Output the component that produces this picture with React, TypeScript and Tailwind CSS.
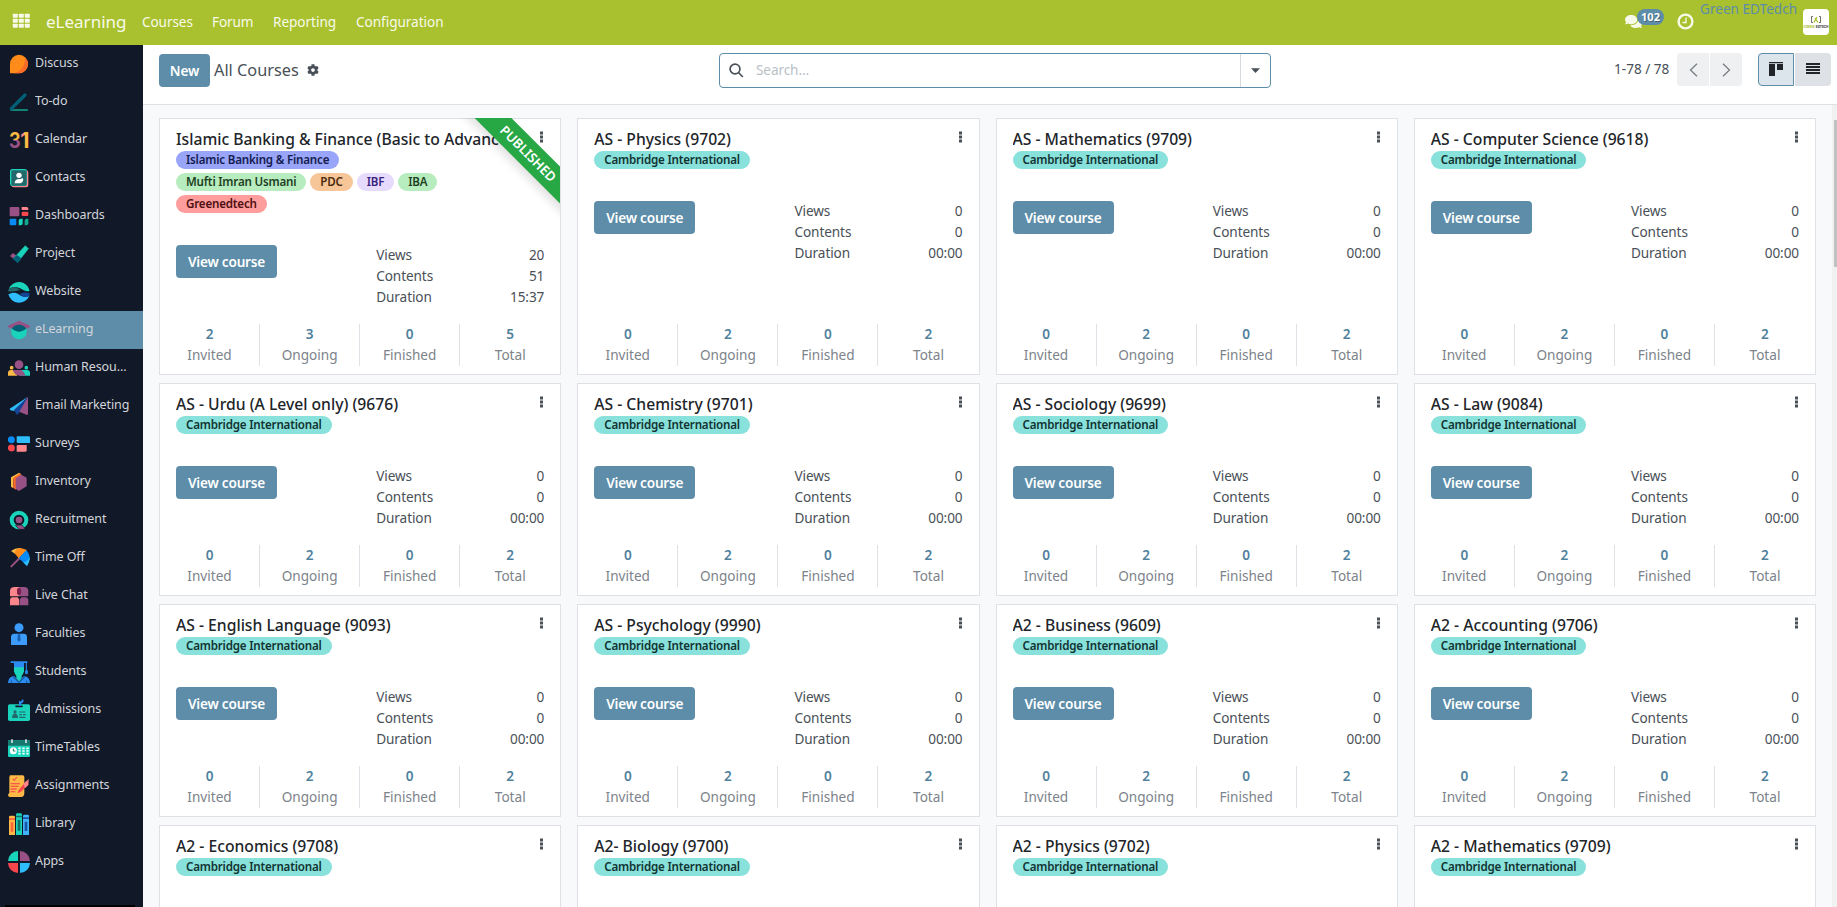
import type { ReactNode } from 'react';
import { FaCog, FaComments } from 'react-icons/fa';

type Tag = { label: string; tone: string };
type Course = {
  title: string;
  tags: Tag[];
  views: string;
  contents: string;
  duration: string;
  stats: [string, string, string, string];
  published?: boolean;
};

const cambridge: Tag[] = [{ label: 'Cambridge International', tone: 'bg-[#89e1db] text-[#113432]' }];

const basic = (title: string): Course => ({
  title,
  tags: cambridge,
  views: '0',
  contents: '0',
  duration: '00:00',
  stats: ['0', '2', '0', '2'],
});

const courses: Course[] = [
  {
    title: 'Islamic Banking & Finance (Basic to Advance)',
    tags: [
      { label: 'Islamic Banking & Finance', tone: 'bg-[#98a5f8] text-[#141c4f]' },
      { label: 'Mufti Imran Usmani', tone: 'bg-[#b7edbe] text-[#1e4023]' },
      { label: 'PDC', tone: 'bg-[#f7c698] text-[#4a2c0e]' },
      { label: 'IBF', tone: 'bg-[#e6dbfc] text-[#3b1f80]' },
      { label: 'IBA', tone: 'bg-[#b7edbe] text-[#1e4023]' },
      { label: 'Greenedtech', tone: 'bg-[#ff9c9c] text-[#4d1010]' },
    ],
    views: '20',
    contents: '51',
    duration: '15:37',
    stats: ['2', '3', '0', '5'],
    published: true,
  },
  ...[
    'AS - Physics (9702)',
    'AS - Mathematics (9709)',
    'AS - Computer Science (9618)',
    'AS - Urdu (A Level only) (9676)',
    'AS - Chemistry (9701)',
    'AS - Sociology (9699)',
    'AS - Law (9084)',
    'AS - English Language (9093)',
    'AS - Psychology (9990)',
    'A2 - Business (9609)',
    'A2 - Accounting (9706)',
    'A2 - Economics (9708)',
    'A2- Biology (9700)',
    'A2 - Physics (9702)',
    'A2 - Mathematics (9709)',
  ].map(basic),
];

const apps: { name: string; icon: ReactNode }[] = [
  {
    name: 'Discuss',
    icon: (
      <>
        <path d="M6 61V33a27 28 0 1 1 27 28z" fill="#ff8c1a" />
        <path d="M52 14a28 28 0 0 1-19 47H16C38 56 52 40 52 14z" fill="#fc6a2a" />
      </>
    ),
  },
  {
    name: 'To-do',
    icon: (
      <>
        <path d="M10 53 51 12" stroke="#035f75" strokeWidth="10" strokeLinecap="round" />
        <path d="M10 57h48" stroke="#12a88f" strokeWidth="4" strokeLinecap="round" />
        <path d="M6 59l0-10 12 8z" fill="#035f75" />
      </>
    ),
  },
  {
    name: 'Calendar',
    icon: (
      <>
        <defs>
          <linearGradient id="three" x1="0" y1="0" x2="0" y2="1">
            <stop offset="0.5" stopColor="#fbb945" />
            <stop offset="0.5" stopColor="#985184" />
          </linearGradient>
          <linearGradient id="one" x1="0" y1="0" x2="1" y2="0">
            <stop offset="0.42" stopColor="#fc868b" />
            <stop offset="0.42" stopColor="#fbb945" />
          </linearGradient>
        </defs>
        <text x="3" y="57" fontFamily="Inter, sans-serif" fontWeight="700" fontSize="64" fill="url(#three)" textLength="35" lengthAdjust="spacingAndGlyphs">3</text>
        <text x="37" y="57" fontFamily="Inter, sans-serif" fontWeight="700" fontSize="64" fill="url(#one)">1</text>
      </>
    ),
  },
  {
    name: 'Contacts',
    icon: (
      <>
        <rect x="10" y="10" width="51" height="51" rx="7" fill="#fc868b" />
        <rect x="6" y="6" width="51" height="51" rx="7" fill="#1ad3bb" />
        <rect x="10" y="10" width="46" height="46" rx="4" fill="#23686b" />
        <circle cx="33" cy="25" r="8" fill="#fff" />
        <path d="M20 49c0-9 5-13 14-13 6 0 9-2 11-3 2 11-3 16-11 16z" fill="#fff" />
      </>
    ),
  },
  {
    name: 'Dashboards',
    icon: (
      <>
        <rect x="5" y="6" width="29" height="28" rx="3" fill="#985184" />
        <path d="M41 6h15q5 0 5 5v4H41z" fill="#fc868b" />
        <rect x="41" y="20" width="20" height="13" rx="3" fill="#f9464c" />
        <rect x="5" y="41" width="20" height="20" rx="3" fill="#088bf5" />
        <path d="M32 61V47q0-6 6-6h6v14q0 6-6 6z" fill="#1ad3bb" />
        <path d="M50 61V47q0-6 6-6h5v14q0 6-6 6z" fill="#12a88f" />
      </>
    ),
  },
  {
    name: 'Project',
    icon: (
      <>
        <path d="M6 39l9-9 22 17-8 11z" fill="#985184" />
        <path d="M52 8l9 9-32 41-13-11z" fill="#1ad3bb" stroke="#1ad3bb" strokeWidth="2" strokeLinejoin="round" />
        <path d="M27 36l13 10-11 14-15-13z" fill="#035f75" />
      </>
    ),
  },
  {
    name: 'Website',
    icon: (
      <>
        <circle cx="33" cy="33" r="33" fill="#111827" />
        <path d="M2 24a33 33 0 0 1 63 5C50 36 40 20 25 19 14 18 8 20 2 24z" fill="#1ad3bb" />
        <path d="M2 24c12-8 24-6 36 4C27 27 18 34 0 31z" fill="#23686b" />
        <path d="M1 40a33 33 0 0 0 63 4C54 49 44 48 34 41 22 33 12 34 1 40z" fill="#2ebcfa" />
        <path d="M34 40c10-6 20-7 31-3l-1 8c-10 5-20 3-30-5z" fill="#144496" />
      </>
    ),
  },
  {
    name: 'eLearning',
    icon: (
      <>
        <path d="M10 26h46v12a23 23 0 0 1-46 0z" fill="#1ad3bb" />
        <path d="M33 5L0 20v4l12 5h42l12-5v-4z" fill="#985184" />
        <path d="M33 17c10 0 18 4 21 12-6 5-14 8-21 9-7-1-15-4-21-9 3-8 11-12 21-12z" fill="#035f75" />
      </>
    ),
  },
  {
    name: 'Human Resources',
    icon: (
      <>
        <circle cx="33" cy="23" r="13" fill="#985184" />
        <circle cx="11" cy="32" r="5.500" fill="#fbb945" />
        <circle cx="55" cy="32" r="5.500" fill="#1ad3bb" />
        <path d="M0 56v-8q0-9 9-9h18v17z" fill="#fbb945" />
        <path d="M66 56v-8q0-9-9-9H36v17z" fill="#1ad3bb" />
        <path d="M14 39h20q14 0 18 17H34Q20 56 14 39z" fill="#985184" />
      </>
    ),
  },
  {
    name: 'Email Marketing',
    icon: (
      <>
        <path d="M60 5L5 41l2 5 12 2z" fill="#2ebcfa" />
        <path d="M60 5L18 45l9 15 9-10z" fill="#144496" />
        <path d="M60 5v53l-3 2-23-10z" fill="#985184" />
      </>
    ),
  },
  {
    name: 'Surveys',
    icon: (
      <>
        <circle cx="10" cy="20" r="10.500" fill="#088bf5" />
        <path d="M26 10h36q4 0 4 4v16H30q-4 0-4-4z" fill="#2ebcfa" />
        <circle cx="10" cy="45" r="10.500" fill="#f9464c" />
        <path d="M30 36h26v16q0 4-4 4H26V40q0-4 4-4z" fill="#fc868b" />
      </>
    ),
  },
  {
    name: 'Inventory',
    icon: (
      <>
        <path d="M33 5l6 4-23 14v29l-7-5V19z" fill="#fbb945" />
        <path d="M35 8l8 5-19 12v31l-8-5V20z" fill="#fc6a2a" />
        <path d="M40 11l16 9v26L33 60l-10-6V22z" fill="#985184" />
      </>
    ),
  },
  {
    name: 'Recruitment',
    icon: (
      <>
        <circle cx="33" cy="33" r="22" fill="none" stroke="#1ad3bb" strokeWidth="12" />
        <path d="M22 48h20l10 13H33z" fill="#985184" stroke="#111827" strokeWidth="2" />
        <circle cx="33" cy="33" r="14" fill="#111827" />
        <circle cx="33" cy="33" r="10" fill="#985184" />
      </>
    ),
  },
  {
    name: 'Time Off',
    icon: (
      <>
        <path d="M10 58l28-28" stroke="#985184" strokeWidth="6" strokeLinecap="round" />
        <path d="M9 12Q24 1 40 4L22 21z" fill="#fbb945" />
        <path d="M20 19Q24 2 40 4 53 7 57 10L32 34z" fill="#ff8c1a" />
        <path d="M55 10Q68 24 64 38 58 50 46 46L32 34z" fill="#088bf5" />
        <path d="M65 30q2 14-8 28L45 46q14-2 20-16z" fill="#2ebcfa" />
      </>
    ),
  },
  {
    name: 'Live Chat',
    icon: (
      <>
        <path d="M6 34V18Q6 6 20 6h14v28z" fill="#fc868b" />
        <path d="M32 6h16q13 0 13 12v16H32z" fill="#985184" />
        <path d="M27 12q6-6 12 0v14q-6 8-12 0z" fill="#7c1f4a" />
        <path d="M6 61V47q0-10 8-10h20v24z" fill="#fc868b" />
        <path d="M34 61V44q4-7 10-7h7q10 0 10 10v14z" fill="#985184" />
        <path d="M34 61V44l-5-8h10l-4 8v17z" fill="#111827" />
      </>
    ),
  },
  {
    name: 'Faculties',
    icon: (
      <>
        <circle cx="33" cy="14" r="13.500" fill="#3d9bfb" />
        <path d="M9 66V42q0-10 10-10h28q10 0 10 10v24z" fill="#3d9bfb" />
        <path d="M30 32h6l2 19-5 5-5-5z" fill="#1b5fae" />
      </>
    ),
  },
  {
    name: 'Students',
    icon: (
      <>
        <path d="M18 18h30v13q-4 16-15 16T18 31z" fill="#1ad3bb" />
        <path d="M8 1h50v5H48v13H18V6H8z" fill="#2b8df2" />
        <path d="M55 4v26M53 29h5v9h-5z" stroke="#2b8df2" strokeWidth="3" fill="#2b8df2" />
        <path d="M0 66Q1 47 18 45l15 13 15-13q17 2 18 21z" fill="#2b8df2" />
        <path d="M25 42h16v8l-8 12-8-12z" fill="#1ad3bb" />
        <path d="M16 47l17 17 17-17" fill="none" stroke="#155b9e" strokeWidth="4" />
        <path d="M10 66v-8M56 66v-8" stroke="#155b9e" strokeWidth="3" />
      </>
    ),
  },
  {
    name: 'Admissions',
    icon: (
      <>
        <rect x="0" y="16" width="66" height="50" rx="5" fill="#1ad3bb" />
        <path d="M24 22h18" stroke="#111827" strokeWidth="5" strokeLinecap="round" />
        <path d="M36 20V10q8 2 8-8" fill="none" stroke="#2b8df2" strokeWidth="6" />
        <circle cx="21" cy="39" r="5" fill="#23686b" />
        <path d="M12 57q0-13 9-13t9 13z" fill="#23686b" />
        <path d="M34 39h18M34 47h8M45 47h8M34 55h18" stroke="#23686b" strokeWidth="3.500" />
      </>
    ),
  },
  {
    name: 'TimeTables',
    icon: (
      <>
        <rect x="0" y="10" width="66" height="50" rx="3" fill="#1ad3bb" />
        <path d="M0 26V13q0-3 3-3h60q3 0 3 3v13z" fill="#17786f" />
        <path d="M12 7v11M54 7v11" stroke="#d5dde5" strokeWidth="5" />
        <circle cx="16" cy="41" r="10.500" fill="#fff" />
        <path d="M16 35v7h6" fill="none" stroke="#17786f" strokeWidth="3" />
        <path d="M31 34h32M31 42h32M31 50h32" stroke="#fff" strokeWidth="5" strokeDasharray="7 5" />
      </>
    ),
  },
  {
    name: 'Assignments',
    icon: (
      <>
        <path d="M6 1h38q5 0 5 5v48q0 12-10 12H6q-6 0-6-7l4-6V6z" fill="#fbb945" />
        <path d="M14 11l5 5 8-10" fill="none" stroke="#f9564c" strokeWidth="3.500" />
        <path d="M8 26h28M8 34h24M8 42h18M8 50h14" stroke="#f9564c" strokeWidth="4" />
        <path d="M28 55l4-10 22-26 8 8-24 24z" fill="#f9464c" />
        <path d="M46 26l16-14-1 18-10 10z" fill="#fc868b" />
      </>
    ),
  },
  {
    name: 'Library',
    icon: (
      <>
        <path d="M3 66V12q0-4 4-4h10q4 0 4 4v54z" fill="#fbb945" />
        <path d="M3 16h18v5H3zM8 28h8v28H8z" fill="#f9663c" />
        <path d="M24 66V5q0-4 4-4h10q4 0 4 4v61z" fill="#1ad3bb" />
        <path d="M24 8h18v5H24zM29 21h8v32h-8z" fill="#0f7468" />
        <path d="M45 66V9q0-4 4-4h10q4 0 4 4v57z" fill="#3fb4fa" />
        <path d="M45 13h18v5H45zM50 26h8v28h-8z" fill="#1b55a5" />
      </>
    ),
  },
  {
    name: 'Apps',
    icon: (
      <>
        <path d="M30 30H0A31 31 0 0 1 30 0z" fill="#1ad3bb" />
        <path d="M36 30h30A31 31 0 0 0 36 0z" fill="#985184" />
        <path d="M30 36H0a31 31 0 0 0 30 30z" fill="#f9464c" />
        <path d="M36 36h30a31 31 0 0 1-30 30z" fill="#2ebcfa" />
      </>
    ),
  },
];

function Header() {
  return (
    <header className="flex h-[45px] shrink-0 items-start bg-[#a9c12f] text-[#f8fae9]">
      <svg className="mt-[13px] ml-[12px] h-[15px] w-[19px]" viewBox="0 0 19 15" fill="#f8fae9">
        {[0, 5, 10].map((y) =>
          [0.8, 6.8, 12.8].map((x) => <rect key={`${x}-${y}`} x={x} y={y + 0.7} width="5" height="4" rx="0.6" />),
        )}
      </svg>
      <span className="ml-[15px] w-[96px] text-[17px] leading-[44px]">eLearning</span>
      <nav className="flex text-[13.6px] leading-[44px] tracking-[-0.05px]">
        <span className="w-[70px] tracking-[-0.1px]">Courses</span>
        <span className="w-[61px] tracking-[-0.15px]">Forum</span>
        <span className="w-[83px]">Reporting</span>
        <span>Configuration</span>
      </nav>
      <div className="ml-auto flex pr-2">
        <div className="relative mt-[13px] mr-[35px] h-4 w-[17px]">
          <FaComments className="h-[17px] w-[17px]" />
          <span className="absolute -top-1 left-[12px] flex h-4 w-[27px] items-center justify-center rounded-full bg-[#5d8da8] text-[11px] font-bold text-white [text-shadow:1px_1px_0_rgba(0,0,0,0.3)]">
            102
          </span>
        </div>
        <svg className="mt-[13px] h-[17px] w-[17px]" viewBox="0 0 17 17" fill="none" stroke="#f8fae9">
          <circle cx="8.500" cy="8.500" r="6.900" strokeWidth="2.400" />
          <path d="M9 4.500v5H5.500" strokeWidth="1.300" />
        </svg>
        <span className="ml-[6px] w-[103px] text-[13.6px] leading-[18px] whitespace-nowrap text-[#5d8da8]">Green EDTedch</span>
        <svg className="mt-[9px] h-[26px] w-[26px]" viewBox="0 0 26 26">
          <rect width="26" height="26" rx="4" fill="#fff" />
          <path d="M10 7.500H8.500v6H10M16 7.500h1.500v6H16" fill="none" stroke="#333" strokeWidth="0.700" />
          <path d="M11 13.500l3-5.500M12 9l3 4.500" stroke="#a9c12f" strokeWidth="1.300" fill="none" />
          <text x="0.500" y="18.800" fontSize="3.200" fontWeight="700" fontFamily="Inter, sans-serif" fill="#a9c12f" textLength="11">GREEN</text>
          <text x="12.800" y="18.800" fontSize="3.200" fontWeight="700" fontFamily="Inter, sans-serif" fill="#333" textLength="12.700">EDTECH</text>
        </svg>
      </div>
    </header>
  );
}

function Sidebar() {
  return (
    <aside className="flex w-[143px] shrink-0 flex-col bg-[#111827]">
      {apps.map(({ name, icon }) => (
        <a
          key={name}
          className={`flex h-[38px] shrink-0 items-center gap-[5px] pl-2 ${name === 'eLearning' ? 'bg-[#5d8da8]' : ''}`}
        >
          <svg className="h-[22px] w-[22px] shrink-0" viewBox="0 0 66 66">
            {icon}
          </svg>
          <span className="-mt-[3px] w-[95px] truncate text-[12.5px] leading-5 tracking-[-0.1px] text-[#d1d5db]">{name}</span>
        </a>
      ))}
      <div className="mt-auto mr-2 ml-[5px] h-[2px] bg-black" />
    </aside>
  );
}

function ControlPanel() {
  return (
    <div className="flex h-[60px] shrink-0 items-start border-b border-[#dee2e6] bg-white text-[#495057]">
      <button className="mt-[9px] ml-4 h-[33px] w-[51px] rounded-[4px] bg-[#5d8da8] text-[13.6px] leading-[31px] font-semibold text-white">
        New
      </button>
      <span className="ml-1 w-[93px] text-[16.3px] leading-[51px] whitespace-nowrap">All Courses</span>
      <FaCog className="mt-[19px] h-3 w-3" />
      <div className="mt-2 ml-[400px] flex h-[35px] w-[552px] items-center rounded-[4px] border border-[#5d8da8]">
        <svg className="ml-[9px] h-[15px] w-[15px]" viewBox="0 0 15 15" fill="none" stroke="#495057" strokeWidth="1.700">
          <circle cx="6" cy="6" r="4.900" />
          <path d="M9.500 9.500l4.300 4.500" />
        </svg>
        <span className="ml-[12px] flex-1 text-[13.6px] tracking-[-0.1px] text-[#b9bfc6]">Search...</span>
        <div className="flex h-full w-[30px] items-center justify-center border-l border-[#d5dade]">
          <svg className="h-[5px] w-[9px]" viewBox="0 0 9 5" fill="#495057">
            <path d="M0 .3h9L4.500 4.900z" />
          </svg>
        </div>
      </div>
      <div className="ml-auto flex pt-2 pr-[6px]">
        <span className="w-[63px] text-[13.6px] leading-8 whitespace-nowrap">1-78 / 78</span>
        <div className="flex gap-px">
          <span className="flex h-[33px] w-8 items-center justify-center rounded-l-[4px] bg-[#eff0f2]">
            <svg className="h-[14px] w-[9px]" viewBox="0 0 9 14" fill="none" stroke="#777d83" strokeWidth="1.300">
              <path d="M8 .7L1.500 7 8 13.300" />
            </svg>
          </span>
          <span className="flex h-[33px] w-8 items-center justify-center rounded-r-[4px] bg-[#eff0f2]">
            <svg className="h-[14px] w-[9px]" viewBox="0 0 9 14" fill="none" stroke="#777d83" strokeWidth="1.300">
              <path d="M1 .7L7.500 7 1 13.300" />
            </svg>
          </span>
        </div>
        <div className="ml-4 flex gap-px">
          <span className="flex h-[33px] w-9 items-center justify-center rounded-l-[4px] border border-[#5d8da8] bg-[#dbe5eb]">
            <svg className="-mt-[2px] h-[14px] w-[14px]" viewBox="0 0 14 14" fill="#212529">
              <path d="M0 0h14v1.200H0zM0 2h6v12H0zM8 2h6v6H8z" />
            </svg>
          </span>
          <span className="flex h-[33px] w-9 items-center justify-center rounded-r-[4px] bg-[#dee2e6]">
            <svg className="-mt-[2px] h-[11px] w-[14px]" viewBox="0 0 14 11" fill="#212529">
              <path d="M0 0h14v2H0zM0 3h14v2H0zM0 6h14v2H0zM0 9h14v2H0z" />
            </svg>
          </span>
        </div>
      </div>
    </div>
  );
}

function Metric({ label, value }: { label: string; value: string }) {
  return (
    <div className="flex justify-between">
      <span>{label}</span>
      <span>{value}</span>
    </div>
  );
}

const statLabels = ['Invited', 'Ongoing', 'Finished', 'Total'];

function CourseCard({ course }: { course: Course }) {
  return (
    <article className="relative flex flex-col border border-[#dee2e6] bg-white">
      <div className="flex h-8 items-start pr-4 pl-4">
        <h2 className="flex-1 overflow-hidden pt-[8px] text-[15.7px] leading-6 font-medium whitespace-nowrap text-[#212529]">
          {course.title}
        </h2>
        <svg className="mt-[12px] ml-[10px] h-3 w-[5px] shrink-0" viewBox="0 0 5 12" fill="#495057">
          <path d="M1 .5h3v3H1zM1 4.500h3v3H1zM1 8.500h3v3H1z" />
        </svg>
      </div>
      <div className="flex w-[290px] flex-wrap gap-1 pl-4">
        {course.tags.map((tag, i) => (
          <span
            key={tag.label}
            className={`h-[18px] rounded-full px-[10px] text-[11.6px] leading-[17px] font-semibold tracking-[-0.2px] whitespace-nowrap ${tag.tone} ${
              course.published && i === 0 ? 'mr-20' : ''
            }`}
          >
            {tag.label}
          </span>
        ))}
      </div>
      <div className="mt-8 flex h-[71px] items-start justify-between pr-4 pl-4">
        <button className="h-[33px] w-[101px] rounded-[4px] bg-[#5d8da8] text-[13.6px] leading-[30px] font-semibold tracking-[-0.2px] text-white">
          View course
        </button>
        <div className="-mt-px w-[168px] text-[13.6px] leading-[21px] tracking-[-0.1px] text-[#495057]">
          <Metric label="Views" value={course.views} />
          <Metric label="Contents" value={course.contents} />
          <Metric label="Duration" value={course.duration} />
        </div>
      </div>
      <div className="mt-auto mb-2 grid grid-cols-4 divide-x divide-[#dee2e6] text-center text-[13.6px]">
        {statLabels.map((label, i) => (
          <div key={label} className="h-[42px]">
            <div className="h-5 leading-5 font-semibold text-[#4f819d]">{course.stats[i]}</div>
            <div className="leading-[21px] text-[#7c838a]">{label}</div>
          </div>
        ))}
      </div>
      {course.published && (
        <div className="pointer-events-none absolute -top-px right-0 h-[100px] w-[100px] overflow-hidden">
          <div className="absolute top-[21px] -right-[47px] h-[26px] w-[160px] rotate-45 bg-[#28a745] pl-1 text-center text-[13.2px] leading-[26px] font-semibold text-white shadow-[0_5px_10px_rgba(0,0,0,0.12)]">
            PUBLISHED
          </div>
        </div>
      )}
    </article>
  );
}

export default function App() {
  return (
    <div className="flex h-[907px] w-[1837px] flex-col overflow-hidden font-['Noto_Sans','Open_Sans',sans-serif]">
      <Header />
      <div className="flex min-h-0 flex-1">
        <Sidebar />
        <main className="flex min-w-0 flex-1 flex-col">
          <ControlPanel />
          <div className="flex min-h-0 flex-1 bg-[#f8f9fa]">
            <div className="grid flex-1 auto-rows-[213px] grid-cols-4 grid-rows-[257px] gap-x-4 gap-y-2 overflow-hidden pt-[13px] pr-4 pl-4">
              {courses.map((course) => (
                <CourseCard key={course.title} course={course} />
              ))}
            </div>
            <div className="w-[5px] bg-[#f1f1f1] pl-[2px]">
              <div className="mt-[15px] h-[147px] bg-[#c1c1c1]" />
            </div>
          </div>
        </main>
      </div>
    </div>
  );
}
